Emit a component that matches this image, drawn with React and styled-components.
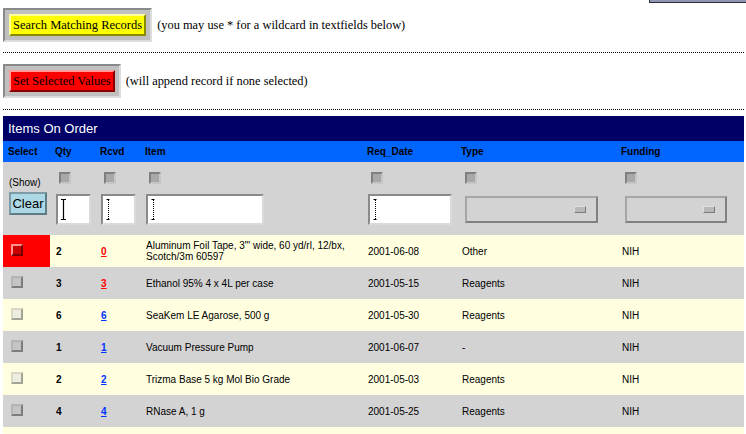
import React from "react";
import styled, { createGlobalStyle } from "styled-components";

const GlobalStyle = createGlobalStyle`
  body {
    margin: 0;
    background: #ffffff;
    font-family: "Liberation Serif", serif;
  }
`;

const rows = [
  {
    qty: 2,
    rcvd: 0,
    late: true,
    item: "Aluminum Foil Tape, 3\"' wide, 60 yd/rl, 12/bx, Scotch/3m 60597",
    date: "2001-06-08",
    type: "Other",
    funding: "NIH",
    selected: true,
  },
  { qty: 3, rcvd: 3, late: true, item: "Ethanol 95% 4 x 4L per case", date: "2001-05-15", type: "Reagents", funding: "NIH" },
  { qty: 6, rcvd: 6, item: "SeaKem LE Agarose, 500 g", date: "2001-05-30", type: "Reagents", funding: "NIH" },
  { qty: 1, rcvd: 1, item: "Vacuum Pressure Pump", date: "2001-06-07", type: "-", funding: "NIH" },
  { qty: 2, rcvd: 2, item: "Trizma Base 5 kg Mol Bio Grade", date: "2001-05-03", type: "Reagents", funding: "NIH" },
  { qty: 4, rcvd: 4, item: "RNase A, 1 g", date: "2001-05-25", type: "Reagents", funding: "NIH" },
];

const checkColors = {
  filter: { tl: "#7f7f7f", br: "#c6c6c6", fill: "#a8a8a8" },
  red: { tl: "#ff9090", br: "#7a0000", fill: "#c80000" },
  gray: { tl: "#b4b4b4", br: "#7c7c7c", fill: "#c4c4c4" },
  yellow: { tl: "#d8d8c4", br: "#a4a494", fill: "#ecece0" },
};

const TopStrip = styled.div`
  display: flex;
  justify-content: flex-end;
  height: 3px;
`;

const Tab = styled.div`
  width: 96px;
  height: 2px;
  background: #8e96b2;
  border-left: 1px solid #2c2c3c;
  border-bottom: 1px solid #2c2c3c;
`;

const Page = styled.div`
  padding: 0 2px 0 3px;
`;

const ActionRow = styled.div`
  display: flex;
  align-items: center;
  gap: 5px;
  margin-top: ${(p) => p.$top}px;
`;

const Frame = styled.div`
  display: flex;
  padding: 4px;
  background: #c0c0c0;
  border: 2px solid;
  border-color: #8a8a8a #dcdcdc #dcdcdc #8a8a8a;
`;

const ActionButton = styled.button`
  font: 12.5px "Liberation Serif", serif;
  color: #000;
  background: ${(p) => p.$fill};
  border: 2px solid;
  border-color: ${(p) => p.$light} ${(p) => p.$dark} ${(p) => p.$dark} ${(p) => p.$light};
  padding: 1px 2px;
  line-height: 16px;
  cursor: pointer;
`;

const Hint = styled.span`
  font: 12.4px "Liberation Serif", serif;
  color: #000;
`;

const Divider = styled.hr`
  border: 0;
  border-top: 1px dotted #000;
  margin: ${(p) => p.$margin};
  height: 0;
`;

const TitleBar = styled.div`
  height: 25px;
  display: flex;
  align-items: center;
  padding-left: 5px;
  background: #000066;
  color: #fff;
  font: 13px "Liberation Sans", sans-serif;
`;

const Table = styled.table`
  width: 741px;
  table-layout: fixed;
  border-collapse: collapse;
  border-spacing: 0;
  font: 10px "Liberation Sans", sans-serif;
  color: #000;
`;

const HeadRow = styled.tr`
  height: 21px;
  background: #0066ff;
`;

const Th = styled.th`
  text-align: left;
  padding: 0 5px;
  font: bold 10px "Liberation Sans", sans-serif;
`;

const FilterRow = styled.tr`
  background: #d3d3d3;
`;

const FilterCell = styled.td`
  vertical-align: top;
  padding: 10px 6px;
`;

const FilterStack = styled.div`
  display: flex;
  flex-direction: column;
  align-items: flex-start;
  gap: ${(p) => p.$gap}px;
`;

const ShowLabel = styled.span`
  display: block;
  margin-top: 5px;
  font: 10px "Liberation Sans", sans-serif;
  line-height: 12px;
`;

const ClearButton = styled.button`
  width: 38px;
  height: 23px;
  margin-top: 3px;
  padding: 0;
  font: 13px "Liberation Sans", sans-serif;
  color: #000;
  background: #add8e6;
  border: 2px solid;
  border-color: #7d9ca6 #5e7c86 #5e7c86 #7d9ca6;
`;

const Check = styled.span`
  display: inline-block;
  box-sizing: border-box;
  width: 12px;
  height: 12px;
  margin-left: ${(p) => p.$indent ?? 3}px;
  border: 2px solid;
  border-color: ${(p) => checkColors[p.$tone].tl} ${(p) => checkColors[p.$tone].br}
    ${(p) => checkColors[p.$tone].br} ${(p) => checkColors[p.$tone].tl};
  background: ${(p) => checkColors[p.$tone].fill};
`;

const Field = styled.div`
  position: relative;
  width: ${(p) => p.$w}px;
  height: 31px;
`;

const Input = styled.input`
  box-sizing: border-box;
  width: 100%;
  height: 100%;
  margin: 0;
  padding: 0 4px;
  background: #fff;
  border: 2px solid;
  border-color: #8a8a8a #dadada #dadada #8a8a8a;
  font: 11px "Liberation Sans", sans-serif;
  outline: none;
`;

const Caret = styled.svg`
  position: absolute;
  left: 4px;
  top: 4px;
  pointer-events: none;
`;

const FakeSelect = styled.div`
  box-sizing: border-box;
  width: ${(p) => p.$w}px;
  height: 27px;
  margin-top: 2px;
  margin-left: 3px;
  display: flex;
  align-items: center;
  justify-content: flex-end;
  padding-right: 10px;
  background: #d3d3d3;
  border: 2px solid;
  border-color: #a6a6a6 #808080 #808080 #a6a6a6;
`;

const SelectKnob = styled.span`
  box-sizing: border-box;
  width: 12px;
  height: 7px;
  background: #b8b8b8;
  border: 1px solid;
  border-color: #e0e0e0 #7a7a7a #7a7a7a #e0e0e0;
`;

const DataRow = styled.tr`
  height: 32px;
  background: ${(p) => (p.$odd ? "#d3d3d3" : "#ffffe0")};
`;

const Td = styled.td`
  padding: 0 6px;
  vertical-align: middle;
  line-height: 11px;
  font-weight: ${(p) => (p.$bold ? "bold" : "normal")};
  background: ${(p) => (p.$alert ? "#ff0000" : "transparent")};
`;

const ItemTd = styled(Td)`
  padding-right: 4px;
`;

const RcvdLink = styled.a`
  font-weight: bold;
  color: ${(p) => (p.$late ? "#ff0000" : "#0033ff")};
  text-decoration: underline;
`;

const IBeam = ({ dotted }) => (
  <Caret width="7" height="23" viewBox="0 0 7 23">
    {dotted ? (
      <g stroke="#000" strokeWidth="1">
        <path d="M1.5 1.5h3M1.5 21.5h3" />
        <path d="M3.5 2v19" strokeDasharray="1 1" />
      </g>
    ) : (
      <path d="M1 1.5h5M1 21.5h5M3.5 1.5v20" stroke="#000" strokeWidth="1.2" fill="none" />
    )}
  </Caret>
);

const TextFilter = ({ w, dotted }) => (
  <FilterCell>
    <FilterStack $gap={10}>
      <Check $tone="filter" />
      <Field $w={w}>
        <Input type="text" />
        <IBeam dotted={dotted} />
      </Field>
    </FilterStack>
  </FilterCell>
);

const SelectFilter = ({ w }) => (
  <FilterCell>
    <FilterStack $gap={10}>
      <Check $tone="filter" />
      <FakeSelect $w={w}>
        <SelectKnob />
      </FakeSelect>
    </FilterStack>
  </FilterCell>
);

const App = () => {
  return (
    <>
      <GlobalStyle />
      <TopStrip>
        <Tab />
      </TopStrip>
      <Page>
        <ActionRow $top={5}>
          <Frame>
            <ActionButton $fill="#ffff00" $light="#ffff9a" $dark="#8a8a00">
              Search Matching Records
            </ActionButton>
          </Frame>
          <Hint>(you may use * for a wildcard in textfields below)</Hint>
        </ActionRow>
        <Divider $margin="10px 0 11px" />
        <ActionRow $top={0}>
          <Frame>
            <ActionButton $fill="#ff0000" $light="#ff9a9a" $dark="#8a0000">
              Set Selected Values
            </ActionButton>
          </Frame>
          <Hint>(will append record if none selected)</Hint>
        </ActionRow>
        <Divider $margin="11px 0 6px" />

        <TitleBar>Items On Order</TitleBar>
        <Table>
          <colgroup>
            <col style={{ width: 47 }} />
            <col style={{ width: 45 }} />
            <col style={{ width: 45 }} />
            <col style={{ width: 222 }} />
            <col style={{ width: 94 }} />
            <col style={{ width: 160 }} />
            <col style={{ width: 128 }} />
          </colgroup>
          <thead>
            <HeadRow>
              <Th>Select</Th>
              <Th>Qty</Th>
              <Th>Rcvd</Th>
              <Th>Item</Th>
              <Th>Req_Date</Th>
              <Th>Type</Th>
              <Th>Funding</Th>
            </HeadRow>
            <FilterRow>
              <FilterCell>
                <ShowLabel>(Show)</ShowLabel>
                <ClearButton>Clear</ClearButton>
              </FilterCell>
              <TextFilter w={35} />
              <TextFilter w={35} dotted />
              <TextFilter w={118} dotted />
              <TextFilter w={84} dotted />
              <SelectFilter w={133} />
              <SelectFilter w={102} />
            </FilterRow>
          </thead>
          <tbody>
            {rows.map((r, i) => (
              <DataRow key={i} $odd={i % 2 === 1}>
                <Td $alert={r.selected}>
                  <Check $tone={r.selected ? "red" : i % 2 ? "gray" : "yellow"} $indent={2} />
                </Td>
                <Td $bold>{r.qty}</Td>
                <Td>
                  <RcvdLink href="#" $late={r.late}>
                    {r.rcvd}
                  </RcvdLink>
                </Td>
                <ItemTd>{r.item}</ItemTd>
                <Td>{r.date}</Td>
                <Td>{r.type}</Td>
                <Td>{r.funding}</Td>
              </DataRow>
            ))}
            <DataRow $odd={false}>
              <Td colSpan={7} />
            </DataRow>
          </tbody>
        </Table>
      </Page>
    </>
  );
};

export default App;
